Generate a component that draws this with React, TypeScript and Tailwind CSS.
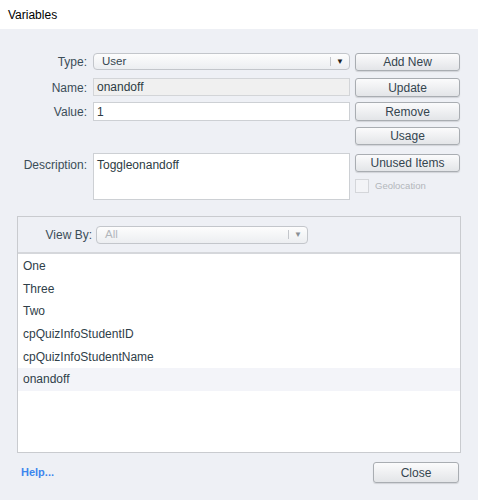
import React from 'react';

const Btn: React.FC<{ label: string; className?: string }> = ({ label, className = '' }) => (
    <button
        className={`flex items-center justify-center rounded-[3px] border border-[#a9adb2] bg-gradient-to-b from-[#fbfbfc] to-[#e3e5e8] text-[12px] text-[#34454f] shadow-[0_1px_1px_rgba(0,0,0,0.12)] ${className}`}
    >
        {label}
    </button>
);

const Select: React.FC<{ value: string; dim?: boolean; className?: string }> = ({ value, dim, className = '' }) => (
    <div
        className={`flex items-center rounded-[4px] border border-[#c3c6cb] bg-gradient-to-b from-[#fdfdfd] to-[#eceef1] ${className}`}
    >
        <span className={`flex-1 pl-[8px] text-[11.5px] ${dim ? 'text-[#b3b7bc]' : 'text-[#34454f]'}`}>{value}</span>
        <span className="h-[9px] w-px bg-[#c3c6cb]"></span>
        <span className={`w-[18px] text-center text-[8px] ${dim ? 'text-[#8a8f95]' : 'text-[#222]'}`}>▼</span>
    </div>
);

const Label: React.FC<{ text: string }> = ({ text }) => (
    <div className="w-[88px] shrink-0 pr-[1px] text-right text-[12px] text-[#3b4d58]">{text}</div>
);

const items = ['One', 'Three', 'Two', 'cpQuizInfoStudentID', 'cpQuizInfoStudentName', 'onandoff'];

export default function App() {
    return (
        <div className="flex h-[500px] w-[478px] flex-col bg-[#eef0f5] font-['Liberation_Sans',sans-serif]">
            {/* Title bar */}
            <div className="flex h-[29px] items-center bg-white pl-[8px] text-[12px] text-black">Variables</div>

            {/* Form */}
            <div className="flex flex-col pt-[24px]">
                <div className="flex h-[18px] items-center">
                    <Label text="Type:" />
                    <Select value="User" className="ml-[5px] h-[17px] w-[257px] self-start" />
                    <Btn label="Add New" className="ml-[5px] h-[18px] w-[105px]" />
                </div>
                <div className="mt-[7px] flex h-[19px] items-center">
                    <Label text="Name:" />
                    <div className="ml-[5px] flex h-[18px] w-[257px] items-center self-start border border-[#d3d5d8] bg-[#f0f0f0] pl-[3px] text-[12px] text-[#2d3b44]">
                        onandoff
                    </div>
                    <Btn label="Update" className="ml-[5px] h-[19px] w-[105px]" />
                </div>
                <div className="mt-[5px] flex h-[19px] items-center">
                    <Label text="Value:" />
                    <div className="ml-[5px] flex h-[19px] w-[257px] items-center border border-[#cdd0d4] bg-white pl-[3px] text-[12px] text-[#2d3b44]">
                        1
                    </div>
                    <Btn label="Remove" className="ml-[5px] h-[19px] w-[105px]" />
                </div>
                <div className="mt-[6px] flex h-[18px] items-center">
                    <div className="w-[355px]"></div>
                    <Btn label="Usage" className="h-[18px] w-[105px]" />
                </div>
                <div className="mt-[8px] flex h-[47px] items-start">
                    <div className="pt-[3px]">
                        <Label text="Description:" />
                    </div>
                    <div className="ml-[5px] h-[47px] w-[257px] border border-[#cdd0d4] bg-white pl-[3px] pt-[2px] text-[12px] text-[#2d3b44]">
                        Toggleonandoff
                    </div>
                    <div className="ml-[5px] flex w-[105px] flex-col">
                        <Btn label="Unused Items" className="mt-[1px] h-[18px] w-[105px]" />
                        <div className="mt-[7px] flex items-center">
                            <span className="h-[14px] w-[14px] border border-[#d4d6da] bg-[#f3f4f7]"></span>
                            <span className="ml-[6px] text-[9.5px] text-[#b2b6bb]">Geolocation</span>
                        </div>
                    </div>
                </div>
            </div>

            {/* List panel */}
            <div className="ml-[17px] mt-[16px] flex h-[237px] w-[444px] flex-col border border-[#c9cbcf]">
                <div className="flex h-[37px] shrink-0 items-center border-b-2 border-[#d5d7db]">
                    <div className="w-[74px] text-right text-[12px] text-[#3b4d58]">View By:</div>
                    <Select value="All" dim className="ml-[4px] h-[18px] w-[212px]" />
                </div>
                <div className="flex-1 bg-white pt-[1px]">
                    {items.map((it, i) => (
                        <div
                            key={i}
                            className={`flex h-[22.6px] items-center pl-[5px] text-[12px] text-[#2f4049] ${i === 5 ? 'bg-[#f3f4f9]' : ''}`}
                        >
                            {it}
                        </div>
                    ))}
                </div>
            </div>

            {/* Footer */}
            <div className="mt-[9px] flex items-center justify-between pl-[21px] pr-[19px]">
                <span className="text-[11px] font-bold text-[#3d86ee]">Help...</span>
                <Btn label="Close" className="h-[21px] w-[86px]" />
            </div>
        </div>
    );
}
